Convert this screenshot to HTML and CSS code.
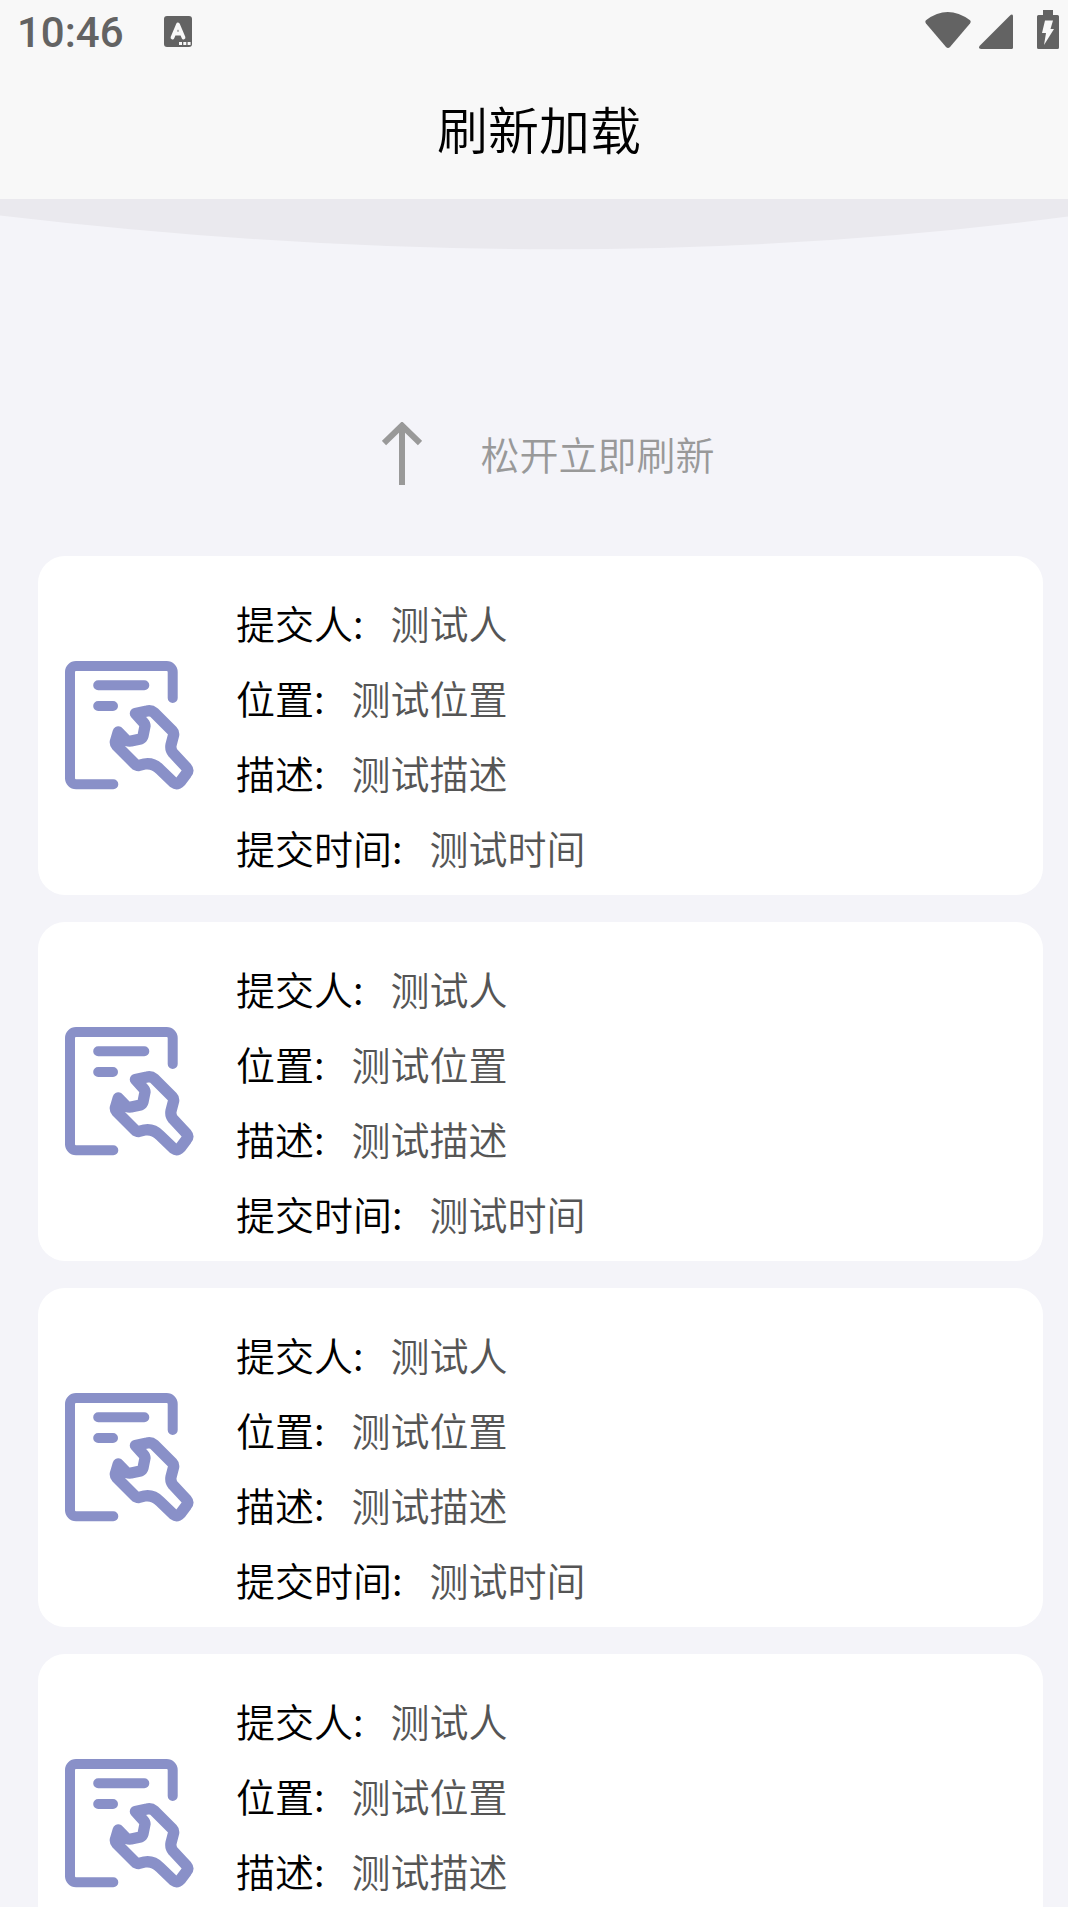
FILE: index.html
```html
<!DOCTYPE html>
<html lang="zh-CN">

<head>
    <meta charset="UTF-8">
    <meta name="viewport" content="width=device-width, initial-scale=1.0">
    <title>刷新加载</title>
    <link rel="stylesheet" href="styles.css">
</head>

<body>
    <svg class="symbols">
        <symbol id="repair" viewBox="0 0 130 130">
            <g fill="none" stroke="#8990c8" stroke-width="10" stroke-linecap="round" stroke-linejoin="round">
                <path d="M107.700 37V11a6 6 0 0 0-6-6H11a6 6 0 0 0-6 6V117.300a6 6 0 0 0 6 6H48.300" />
                <path d="M33.200 24.300H79.300M33.200 45H48" />
                <path stroke-width="11.300" d="M70.400 52.500L82 50Q86 49 89 51.500L107.500 70Q109 71.500 108.600 74L106 84Q105.200 88.500 108 92L121.500 106.500Q124 109.500 121.500 112.500L115.500 120.500Q112 124 108.500 121.500L95 108.500Q88 101.500 79.500 103L73.500 104.500Q71.500 104.500 70 103L51.500 84.500Q50 83 50.400 80.500L53.200 71L60.500 78.500Q62.500 80.500 66 80L75.500 78Q77.500 77 78 75L80 65Q80 63 78.500 61.500Z" />
            </g>
        </symbol>
    </svg>

    <div class="status-bar">
        <span class="time">10:46</span>
        <svg class="ime" width="28" height="31" viewBox="0 0 28 31">
            <rect width="28" height="31" rx="3" fill="#636363" />
            <path d="M8.500 21.500L14 8.500L19.500 21.500M10.500 17.500H17.500" fill="none" stroke="#f8f8f8" stroke-width="3.800" stroke-linecap="round" stroke-linejoin="round" />
            <path d="M15 26h3v3h-3zM19.300 26h3v3h-3zM23.600 26h3v3h-3z" fill="#f8f8f8" />
        </svg>
        <svg class="signals" width="136" height="40" viewBox="0 0 136 40" fill="#636363">
            <path d="M1.300 10Q22.500-6 44.700 10Q46.500 11.500 45 13.500L25 37Q23 39 21 37L1 13.500Q-.5 11.500 1.300 10Z" />
            <path d="M84.500 6Q88 3 88 6.500V37.500Q88 39 86.500 39H56Q52.500 38.500 55 35.500Z" />
            <path d="M118 0H128V5H132.500Q134 5 134 6.500V37.500Q134 39 132.500 39H113.500Q112 39 112 37.500V6.500Q112 5 113.500 5H118Z" />
            <path d="M120 10.500H128L125.500 19H129L119 35L121 23H117Z" fill="#f8f8f8" />
        </svg>
    </div>
    <h1 class="title">刷新加载</h1>

    <div class="list">
        <svg class="overscroll" width="1068" height="51" viewBox="0 0 1068 51">
            <path d="M0 0H1068V17.500Q566 83.500 0 16.500Z" fill="#eae9ee" />
        </svg>
        <div class="refresh">
            <svg width="40" height="64" viewBox="0 0 40 64" fill="none" stroke="#999" stroke-width="6">
                <path d="M20 3V63M2 21L20 3.500L38 21" />
            </svg>
            <span>松开立即刷新</span>
        </div>

        <div class="card">
            <svg class="icon"><use href="#repair" /></svg>
            <div class="info">
                <p>提交人:<span>测试人</span></p>
                <p>位置:<span>测试位置</span></p>
                <p>描述:<span>测试描述</span></p>
                <p>提交时间:<span>测试时间</span></p>
            </div>
        </div>
        <div class="card">
            <svg class="icon"><use href="#repair" /></svg>
            <div class="info">
                <p>提交人:<span>测试人</span></p>
                <p>位置:<span>测试位置</span></p>
                <p>描述:<span>测试描述</span></p>
                <p>提交时间:<span>测试时间</span></p>
            </div>
        </div>
        <div class="card">
            <svg class="icon"><use href="#repair" /></svg>
            <div class="info">
                <p>提交人:<span>测试人</span></p>
                <p>位置:<span>测试位置</span></p>
                <p>描述:<span>测试描述</span></p>
                <p>提交时间:<span>测试时间</span></p>
            </div>
        </div>
        <div class="card">
            <svg class="icon"><use href="#repair" /></svg>
            <div class="info">
                <p>提交人:<span>测试人</span></p>
                <p>位置:<span>测试位置</span></p>
                <p>描述:<span>测试描述</span></p>
                <p>提交时间:<span>测试时间</span></p>
            </div>
        </div>
    </div>
</body>

</html>
```
FILE: styles.css
```css
body {
    display: flex;
    flex-direction: column;
    height: 100vh;
    margin: 0;
    overflow: hidden;
    background-color: #f8f8f8;
    font-family: "Noto Sans CJK SC", sans-serif;
    font-weight: 350;
}

.symbols {
    display: none;
}

.status-bar {
    display: flex;
    flex: none;
    align-items: center;
    box-sizing: border-box;
    height: 64px;
    padding: 0 7px 4px 17px;
    color: #636363;
}

.time {
    width: 147px;
    padding-top: 6px;
    font-family: Roboto, sans-serif;
    font-size: 42px;
    font-weight: 500;
    line-height: 60px;
}

.ime {
    margin-top: 2px;
}

.signals {
    margin-left: auto;
}

.title {
    flex: none;
    height: 135px;
    margin: 0;
    padding-left: 10px;
    font-size: 51px;
    font-weight: 350;
    line-height: 129px;
    text-align: center;
}

.list {
    flex: 1;
    min-height: 0;
    overflow: hidden;
    background-color: #f4f4f9;
}

.overscroll {
    display: block;
}

.refresh {
    display: flex;
    align-items: center;
    justify-content: center;
    gap: 58px;
    box-sizing: border-box;
    height: 306px;
    padding: 102px 0 0 29px;
    color: #999;
    font-size: 39px;
}

.refresh span {
    margin-top: -3px;
}

.card {
    display: flex;
    align-items: center;
    box-sizing: border-box;
    height: 339px;
    margin: 0 25px 27px 38px;
    padding-left: 27px;
    border-radius: 27px;
    background-color: #fff;
}

.icon {
    width: 130px;
    height: 130px;
    margin-right: 41px;
}

.info {
    padding-top: 18px;
}

.info p {
    margin: 0;
    font-size: 39px;
    line-height: 75px;
}

.info span {
    margin-left: 27px;
    color: #555;
}
```
